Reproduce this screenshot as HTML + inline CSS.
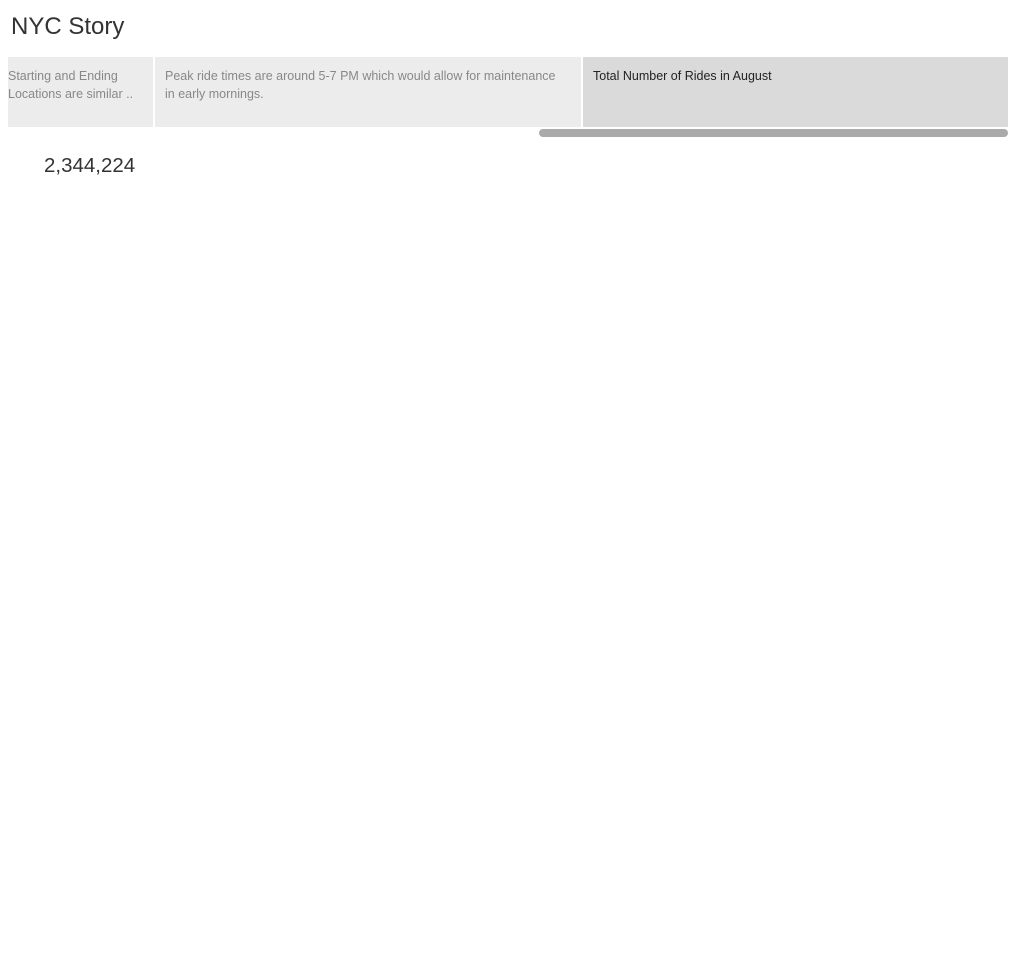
<!DOCTYPE html>
<html><head><meta charset="utf-8"><style>
body{margin:0;width:1015px;height:963px;background:#fff;font-family:"Liberation Sans",sans-serif;position:relative;overflow:hidden}
.t{position:absolute;left:11px;top:13px;font-size:24px;color:#333}
.c{position:absolute;top:57px;height:70px;font-size:12.5px;line-height:18px;color:#888;box-sizing:border-box;padding-top:10px;overflow:hidden}
.n{position:absolute;left:44px;top:154px;font-size:20.5px;color:#333}
</style></head><body>
<div class="t">NYC Story</div>
<div class="c" style="left:8px;width:145px;background:#ececec;">Starting and Ending<br>Locations are similar ..</div>
<div class="c" style="left:155px;width:426px;background:#ececec;padding-left:10px">Peak ride times are around 5-7 PM which would allow for maintenance<br>in early mornings.</div>
<div class="c" style="left:583px;width:425px;background:#dadada;padding-left:10px;color:#222">Total Number of Rides in August</div>
<div style="position:absolute;left:539px;top:129px;width:469px;height:8px;border-radius:4px;background:#aaa"></div>
<div class="n">2,344,224</div>
</body></html>
